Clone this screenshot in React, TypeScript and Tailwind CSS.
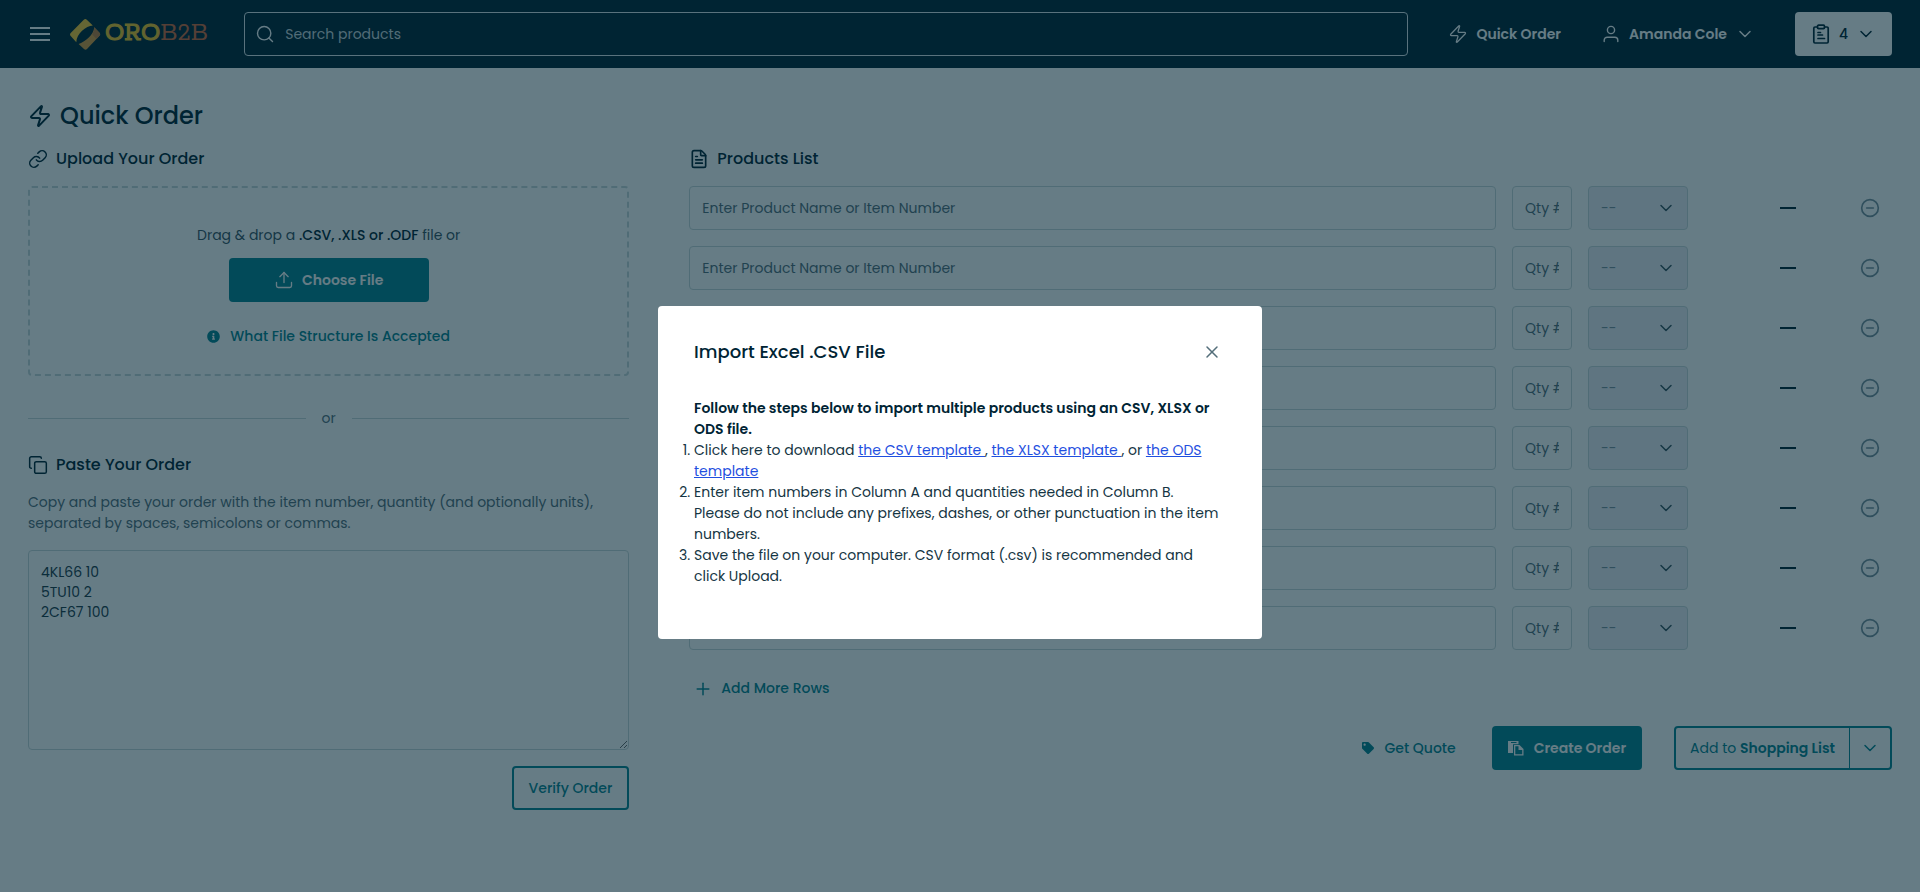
import { ChevronDown, CircleMinus, Copy, FileText, Link as LinkIcon, Plus, Search, Upload, X, Zap } from 'lucide-react';
import { FaInfoCircle, FaTag } from 'react-icons/fa';

const rows = [1, 2, 3, 4, 5, 6, 7, 8];

function MenuIcon() {
  return (
    <svg width="20" height="14" viewBox="0 0 20 14" fill="currentColor" aria-hidden="true">
      <path d="M0 0h20v2H0zM0 6h20v2H0zM0 12h20v2H0z" />
    </svg>
  );
}

function UserIcon() {
  return (
    <svg width="20" height="20" viewBox="0 0 20 20" fill="none" stroke="currentColor" strokeWidth="1.4" strokeLinecap="round" aria-hidden="true">
      <circle cx="10" cy="6" r="3.6" />
      <path d="M3.2 17.6v-1.4a3 3 0 0 1 3-3h7.6a3 3 0 0 1 3 3v1.4" />
    </svg>
  );
}

function ClipboardIcon() {
  return (
    <svg width="20" height="20" viewBox="0 0 20 20" fill="none" stroke="currentColor" strokeWidth="1.7" strokeLinecap="round" strokeLinejoin="round" aria-hidden="true">
      <path d="M6.5 3H4a1.2 1.2 0 0 0-1.2 1.2v13.6A1.2 1.2 0 0 0 4 19h12a1.2 1.2 0 0 0 1.2-1.2V4.2A1.2 1.2 0 0 0 16 3h-2.5" />
      <rect x="6.5" y="1.2" width="7" height="3.4" rx="1" />
      <path d="M7 8.500h2.500M7 11h4.500M7 14.500h6.500" />
    </svg>
  );
}

function PasteIcon() {
  return (
    <svg width="16" height="15" viewBox="0 0 16 15" fill="currentColor" aria-hidden="true">
      <path fillRule="evenodd" d="M0 0h10.5v3.2H5V12H0zM3 1v1h5.5V1z" />
      <path fillRule="evenodd" d="M6 4h5.5L15.5 8v6.500H6zM7.3 5.3v7.9h6.900V9h-3.700V5.300z" />
    </svg>
  );
}

function Logo() {
  return (
    <a href="#home" aria-label="ORO B2B" className="flex items-center gap-1">
      <svg width="31" height="31" viewBox="0 0 31 31" aria-hidden="true">
        <path d="M13.8 0.800a2.200 2.200 0 0 1 3 0L22.800 6.600C16 7 6.500 14.500 6.300 23.200L0.700 17a2.200 2.200 0 0 1 0-3z" fill="#fcc936" />
        <path d="M24.300 8.200L29.500 13.800a2.200 2.200 0 0 1 0 3L17 30a2.200 2.200 0 0 1-3 0L8.600 25C15 22.500 23.500 16.500 24.300 8.200z" fill="#dc9a3c" />
        <path d="M24.300 8.200L29.500 13.800a2.200 2.200 0 0 1 0 3L26.500 20 22.300 15.500A15 15 0 0 0 24.300 8.200z" fill="#c07a3c" />
      </svg>
      <span className="font-['Roboto_Slab','Rokkitt','DejaVu_Serif_Condensed','DejaVu_Serif',serif] text-[27px] leading-8 text-[#f5c32a]">
        <span className="[-webkit-text-stroke:1px_#f5c32a]">ORO</span>
        <span className="text-[#d2683a]">B2B</span>
      </span>
    </a>
  );
}

function Header() {
  return (
    <header className="flex h-17 items-center bg-[#002434] px-7 text-white">
      <button type="button" aria-label="Menu" className="mr-5 ml-0.5 flex">
        <MenuIcon />
      </button>
      <Logo />
      <label className="ml-9 flex h-11 grow items-center gap-2.5 rounded border border-[#dfe7ea] px-2.5">
        <Search size={20} strokeWidth={1.7} />
        <input type="search" aria-label="Search products" placeholder="Search products" className="grow bg-transparent outline-none placeholder:text-[#cbd6db]" />
      </label>
      <a href="#quick-order" className="ml-10 flex items-center gap-2 font-semibold">
        <Zap size={20} strokeWidth={1.5} />
        Quick Order
      </a>
      <button type="button" className="ml-10 flex items-center gap-2 font-semibold">
        <UserIcon />
        Amanda Cole
        <ChevronDown size={20} strokeWidth={1.8} />
      </button>
      <button type="button" aria-label="Shopping lists" className="ml-10 flex h-11 items-center gap-2 rounded bg-white px-4 font-medium text-[#002434]">
        <ClipboardIcon />
        4
        <ChevronDown size={20} strokeWidth={1.8} />
      </button>
    </header>
  );
}

function ProductRow({ n }: { n: number }) {
  return (
    <li className="flex h-11 items-center gap-4">
      <input aria-label={`Product ${n}`} placeholder="Enter Product Name or Item Number" className="h-11 min-w-0 grow rounded border border-[#c8d7d9] px-3 placeholder:text-[#546e7a]" />
      <input aria-label={`Quantity ${n}`} placeholder="Qty #" className="h-11 w-15 rounded border border-[#c8d7d9] px-3 placeholder:text-[#546e7a]" />
      <div className="relative w-25">
        <select disabled aria-label={`Unit ${n}`} className="h-11 w-full appearance-none rounded border border-[#c8d7d9] bg-[#eeeef5] px-3 text-[#78909c] opacity-100">
          <option>--</option>
        </select>
        <ChevronDown size={20} strokeWidth={1.8} className="pointer-events-none absolute top-3 right-3 text-[#37535f]" />
      </div>
      <div className="flex w-35 justify-end">
        <span className="mr-12 h-0.5 w-4 bg-[#002434]" />
      </div>
      <button type="button" aria-label={`Remove row ${n}`} className="mr-3 text-[#78909c]">
        <CircleMinus size={20} strokeWidth={2} />
      </button>
    </li>
  );
}

export default function App() {
  return (
    <div className="min-h-screen bg-white font-['Poppins','Inter',sans-serif] text-[14px] leading-[21px] text-[#002434]">
      <Header />
      <main className="px-7 pt-8">
        <h1 className="flex h-8 items-center gap-2 text-2xl font-medium">
          <Zap size={24} strokeWidth={2} />
          Quick Order
        </h1>
        <div className="grid grid-cols-[1fr_2fr] gap-15 pt-4">
          <div>
            <h2 className="flex h-[22px] items-center gap-2 text-base font-medium">
              <LinkIcon size={20} strokeWidth={1.8} />
              Upload Your Order
            </h2>
            <div className="mt-4 flex h-[190px] flex-col items-center rounded border-2 border-dashed border-[#c8d7d9] pt-[37px]">
              <p className="text-[#37535f]">
                Drag &amp; drop a <strong className="font-medium text-[#002434]">.CSV, .XLS or .ODF</strong> file or
              </p>
              <button type="button" className="mt-3 flex h-11 w-50 items-center justify-center gap-2 rounded bg-[#078391] font-semibold text-white">
                <Upload size={20} strokeWidth={1.6} />
                Choose File
              </button>
              <a href="#file-structure" className="mt-6 flex items-center gap-2.5 font-medium text-[#078391]">
                <FaInfoCircle size={13} />
                What File Structure Is Accepted
              </a>
            </div>
            <div className="mt-8 flex items-center gap-4 text-[#546e7a]">
              <span className="h-px grow bg-[#c8d7d9]" />
              or
              <span className="h-px grow bg-[#c8d7d9]" />
            </div>
            <h2 className="mt-[25px] flex h-[22px] items-center gap-2 text-base font-medium">
              <Copy size={20} strokeWidth={1.8} />
              <label htmlFor="paste-order">Paste Your Order</label>
            </h2>
            <p className="mt-4 text-[#546e7a]">Copy and paste your order with the item number, quantity (and optionally units), separated by spaces, semicolons or commas.</p>
            <textarea id="paste-order" defaultValue={'4KL66 10\n5TU10 2\n2CF67 100'} className="mt-4 block h-50 w-full rounded border border-[#c8d7d9] px-3 py-[11px] leading-5 text-[#1c3a48]" />
            <div className="mt-4 flex justify-end">
              <button type="button" className="h-11 rounded border-2 border-[#078391] px-[15px] font-medium text-[#078391]">
                Verify Order
              </button>
            </div>
          </div>
          <div>
            <h2 className="flex h-[22px] items-center gap-2 text-base font-medium">
              <FileText size={20} strokeWidth={2} />
              Products List
            </h2>
            <ul className="mt-4 flex flex-col gap-4">
              {rows.map((n) => (
                <ProductRow key={n} n={n} />
              ))}
            </ul>
            <button type="button" className="mt-7 ml-1 flex items-center gap-2 font-medium text-[#078391]">
              <Plus size={20} strokeWidth={1.8} />
              Add More Rows
            </button>
            <div className="mt-[27px] flex justify-end gap-8">
              <button type="button" className="mr-1 flex h-11 items-center gap-2.5 font-medium text-[#078391]">
                <FaTag size={12} />
                Get Quote
              </button>
              <button type="button" className="flex h-11 items-center gap-2.5 rounded bg-[#078391] px-4 font-semibold text-white">
                <PasteIcon />
                Create Order
              </button>
              <div className="flex h-11 rounded border-2 border-[#078391] text-[#078391]">
                <button type="button" className="px-3.5">
                  Add to <span className="font-semibold">Shopping List</span>
                </button>
                <button type="button" aria-label="More lists" className="border-l border-[#078391] px-2.5">
                  <ChevronDown size={20} strokeWidth={1.8} />
                </button>
              </div>
            </div>
          </div>
        </div>
      </main>

      <div className="fixed inset-0 flex items-center justify-center bg-[#002434]/60 pt-[53px]">
        <section role="dialog" aria-modal="true" aria-labelledby="dialog-title" className="w-[604px] rounded bg-white pt-8 pr-10 pb-[52px] pl-9">
          <div className="flex h-7 items-center justify-between">
            <h2 id="dialog-title" className="text-lg font-medium">
              Import Excel .CSV File
            </h2>
            <button type="button" aria-label="Close" className="text-[#546e7a]">
              <X size={20} strokeWidth={1.8} />
            </button>
          </div>
          <p className="mt-8 font-semibold">Follow the steps below to import multiple products using an CSV, XLSX or ODS file.</p>
          <ol className="list-decimal text-[#153543]">
            <li>
              Click here to download{' '}
              <a href="#csv" className="text-[#1f4fe0] underline">the CSV template </a>,{' '}
              <a href="#xlsx" className="text-[#1f4fe0] underline">the XLSX template </a>, or{' '}
              <a href="#ods" className="text-[#1f4fe0] underline">the ODS template</a>
            </li>
            <li>Enter item numbers in Column A and quantities needed in Column B. Please do not include any prefixes, dashes, or other punctuation in the item numbers.</li>
            <li>Save the file on your computer. CSV format (.csv) is recommended and click Upload.</li>
          </ol>
        </section>
      </div>
    </div>
  );
}
